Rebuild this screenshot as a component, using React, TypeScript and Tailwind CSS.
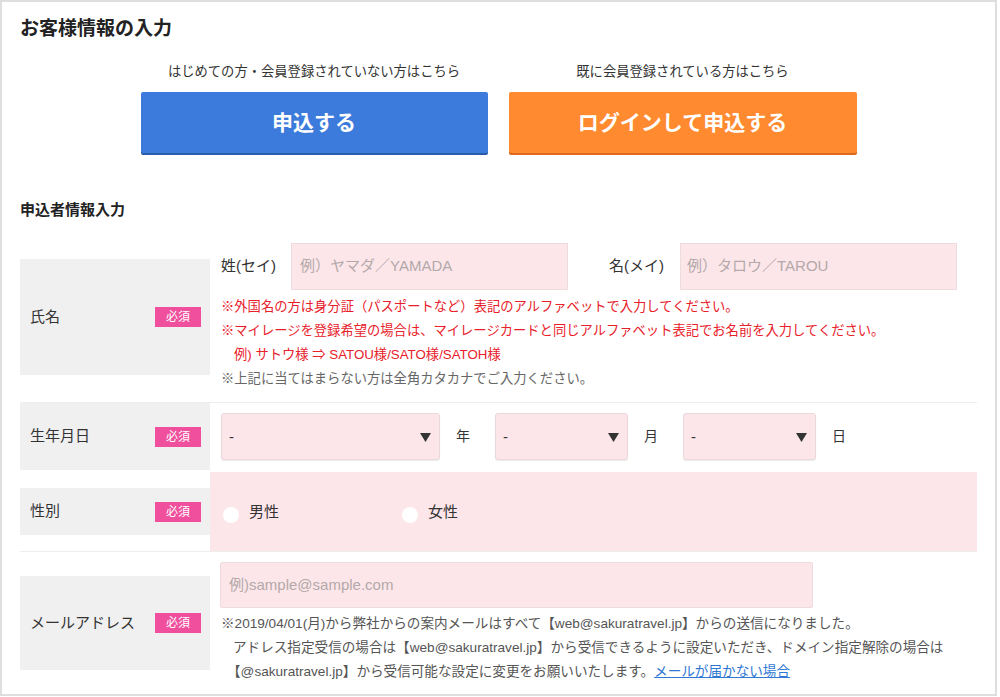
import React from "react";

const font = {
  fontFamily: '"Liberation Sans", "Noto Sans CJK JP", sans-serif',
};

function Badge() {
  return (
    <span className="ml-auto mr-[9px] flex h-[20px] w-[46px] items-center justify-center bg-[#ef4f9c] text-[12px] leading-none text-white">
      必須
    </span>
  );
}

function Label({ text, h }: { text: string; h: string }) {
  return (
    <div className={`flex w-[190px] shrink-0 items-center bg-[#f0f0f0] pl-[10px] ${h}`}>
      <span className="text-[15px] text-[#333]">{text}</span>
      <Badge />
    </div>
  );
}

function Arrow() {
  return (
    <svg width="11" height="9" viewBox="0 0 11 9" className="absolute right-[8px] top-[19px]">
      <polygon points="0,0 11,0 5.5,9" fill="#333" />
    </svg>
  );
}

function Select({ w }: { w: string }) {
  return (
    <div className={`relative h-[47px] rounded-[3px] border border-[#ead9db] bg-[#fde6e9] shadow-[0_1px_1px_rgba(0,0,0,0.08)] ${w}`}>
      <span className="absolute left-[7px] top-[12px] text-[15px] leading-[22px] text-[#333]">-</span>
      <Arrow />
    </div>
  );
}

function Radio({ label }: { label: string }) {
  return (
    <div className="flex w-[179px] items-center">
      <span className="mt-[6px] block h-[16px] w-[16px] rounded-full bg-white" />
      <span className="ml-[10px] text-[15px] leading-[22px] text-[#333]">{label}</span>
    </div>
  );
}

export default function App() {
  return (
    <div style={font} className="h-[697px] w-[1000px] bg-white">
      <div className="h-[696px] w-[997px] overflow-hidden border-2 border-[#dedede] px-[18px] pt-[14px]">
        {/* title */}
        <h1 className="text-[19px] font-bold leading-[26px] text-[#222]">お客様情報の入力</h1>

        {/* buttons */}
        <div className="mt-[21px] flex justify-center gap-[21px]">
          <div className="flex w-[347px] flex-col items-center">
            <p className="text-[13.3px] leading-[18px] text-[#333]">はじめての方・会員登録されていない方はこちら</p>
            <button className="mt-[11px] flex h-[61px] w-full items-center justify-center rounded-[2px] bg-[#3c7bdb] text-[21px] font-bold text-white shadow-[0_2px_0_#2a5cad]">
              申込する
            </button>
          </div>
          <div className="flex w-[348px] flex-col items-center">
            <p className="text-[13.3px] leading-[18px] text-[#333]">既に会員登録されている方はこちら</p>
            <button className="mt-[11px] flex h-[61px] w-full items-center justify-center rounded-[2px] bg-[#ff8a2f] text-[21px] font-bold text-white shadow-[0_2px_0_#e0681c]">
              ログインして申込する
            </button>
          </div>
        </div>

        {/* section heading */}
        <h2 className="mt-[46px] text-[15px] font-bold leading-[22px] text-[#222]">申込者情報入力</h2>

        <div className="mt-[22px]">
          {/* name */}
          <div className="flex items-center border-b border-[#eeeeee] pb-[11px]">
            <Label text="氏名" h="h-[116px]" />
            <div className="pl-[11px]">
              <div className="flex items-center">
                <span className="w-[70px] text-[15px] text-[#333]">姓(セイ)</span>
                <div className="flex h-[47px] w-[277px] items-center border border-[#ecdcde] bg-[#fde6e9] px-[8px] text-[15px] text-[#b3a9aa]">
                  例）ヤマダ／YAMADA
                </div>
                <span className="ml-[41px] w-[71px] text-[15px] text-[#333]">名(メイ)</span>
                <div className="flex h-[47px] w-[277px] items-center border border-[#ecdcde] bg-[#fde6e9] px-[6px] text-[15px] text-[#b3a9aa]">
                  例）タロウ／TAROU
                </div>
              </div>
              <div className="mt-[5px] text-[13.3px] leading-[24px]">
                <p className="text-[#e8202a]">※外国名の方は身分証（パスポートなど）表記のアルファベットで入力してください。</p>
                <p className="text-[#e8202a]">※マイレージを登録希望の場合は、マイレージカードと同じアルファベット表記でお名前を入力してください。</p>
                <p className="pl-[13px] text-[#e8202a]">例) サトウ様 ⇒ SATOU様/SATO様/SATOH様</p>
                <p className="text-[#666]">※上記に当てはまらない方は全角カタカナでご入力ください。</p>
              </div>
            </div>
          </div>

          {/* birthday */}
          <div className="flex items-center">
            <Label text="生年月日" h="h-[67px]" />
            <div className="flex items-center pl-[11px]">
              <Select w="w-[219px]" />
              <span className="mx-[16px] w-[8px] text-[14px] text-[#333]">年</span>
              <div className="ml-[15px]" />
              <Select w="w-[133px]" />
              <span className="mx-[16px] w-[8px] text-[14px] text-[#333]">月</span>
              <div className="ml-[15px]" />
              <Select w="w-[133px]" />
              <span className="ml-[16px] text-[14px] text-[#333]">日</span>
            </div>
          </div>

          {/* gender */}
          <div className="mt-[2px] flex items-center border-b border-[#eeeeee]">
            <Label text="性別" h="h-[47px]" />
            <div className="flex h-[79px] flex-1 items-center bg-[#fde6e9] pl-[13px]">
              <Radio label="男性" />
              <Radio label="女性" />
            </div>
          </div>

          {/* email */}
          <div className="flex items-center pt-[10px]">
            <Label text="メールアドレス" h="h-[94px]" />
            <div className="pl-[10px]">
              <div className="flex h-[46px] w-[593px] items-center rounded-[2px] border border-[#ecdcde] bg-[#fde6e9] px-[8px] text-[15px] text-[#b3a9aa]">
                例)sample@sample.com
              </div>
              <div className="mt-[4px] pl-[1px] text-[13.6px] leading-[24px] text-[#555]">
                <p>※2019/04/01(月)から弊社からの案内メールはすべて【web@sakuratravel.jp】からの送信になりました。</p>
                <p className="pl-[12px]">アドレス指定受信の場合は【web@sakuratravel.jp】から受信できるように設定いただき、ドメイン指定解除の場合は</p>
                <p className="pl-[6px]">
                  【@sakuratravel.jp】から受信可能な設定に変更をお願いいたします。
                  <a className="text-[#2f78d4] underline">メールが届かない場合</a>
                </p>
              </div>
            </div>
          </div>
        </div>
      </div>
    </div>
  );
}
